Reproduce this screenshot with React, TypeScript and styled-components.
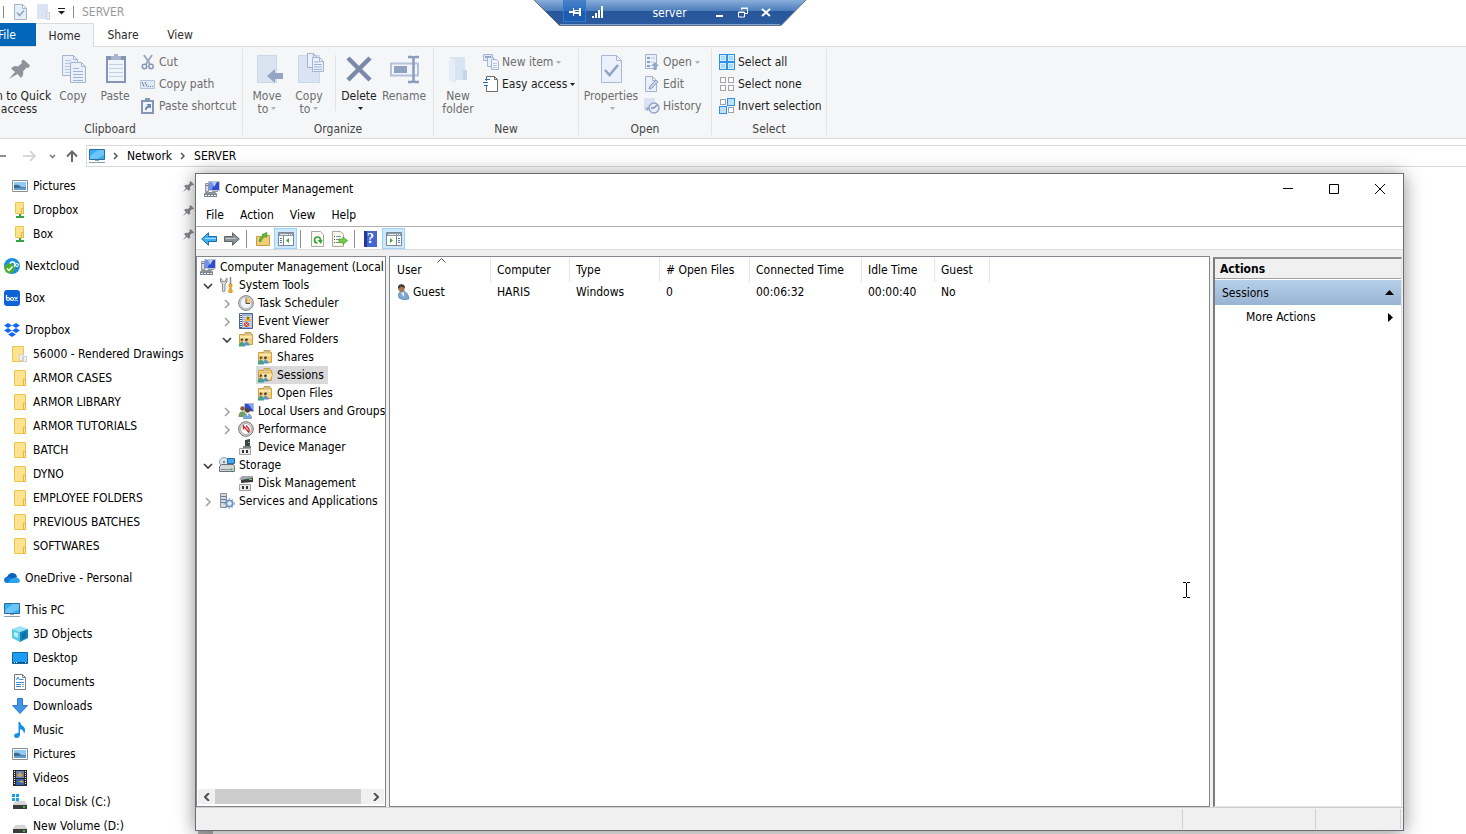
import React from "react";
import styled, { createGlobalStyle } from "styled-components";

const FONT = `"DejaVu Sans Condensed", "Open Sans", sans-serif`;

const GlobalStyle = createGlobalStyle`
  *, *::before, *::after { box-sizing: border-box; }
  html, body { margin: 0; height: 100%; background: #fff; }
  body { font: 12px/16px ${FONT}; color: #000; overflow: hidden; }
  button { font: inherit; color: inherit; background: none; border: 0; margin: 0; padding: 0; text-align: left; cursor: default; }
  a { color: inherit; text-decoration: none; }
  ul { list-style: none; margin: 0; padding: 0; }
  svg { display: block; flex: none; }
`;

/* ---------- icons ---------- */

type IconProps = { w?: number; h?: number; children: React.ReactNode };
const Ico = ({ w = 16, h = 16, children }: IconProps) => (
  <svg width={w} height={h} viewBox={`0 0 ${w} ${h}`} fill="none" aria-hidden="true">
    {children}
  </svg>
);

const Page = ({ x, y, w, h, c = "#a3b4d0", f = "#eaf0f9" }: { x: number; y: number; w: number; h: number; c?: string; f?: string }) => (
  <path d={`M${x + 0.5} ${y + 0.5}h${w - 5}l4 4v${h - 5}h${-(w - 1)}zM${x + w - 4.5} ${y + 0.5}v4h4`} fill={f} stroke={c} />
);

const Caret = ({ c = "#2b2b2b" }: { c?: string }) => (
  <Ico w={5} h={3}><path d="M0 0h5L2.500 3z" fill={c} /></Ico>
);

const PinBig = () => (
  <Ico w={32} h={32}>
    <path d="M6 26L12 19L8 15.500Q11 12 15 13.500L19 10L18 8.500L20.500 6.500L27 12.500L25.500 15L23.500 14.500L20 18.500Q21 22 18 25L14.500 21z" fill="#8f9399" />
  </Ico>
);
const CopyBig = () => (
  <Ico w={32} h={32}>
    <Page x={5} y={2} w={16} h={21} />
    <path d="M8 7.500h6M8 10.500h9M8 13.500h6M8 16.500h6M8 19.500h6" stroke="#b9c8e0" />
    <Page x={13} y={9} w={16} h={21} />
    <path d="M16 15.500h6M16 18.500h10M16 21.500h10M16 24.500h10M16 27.500h10" stroke="#9fb3d3" />
  </Ico>
);
const PasteBig = () => (
  <Ico w={32} h={32}>
    <path d="M7 3h20v27H7z" fill="#8595b5" />
    <path d="M9 7h16v21H9z" fill="#f0f5fc" />
    <path d="M10 11.500h14M10 15.500h14M10 19.500h14M10 23.500h14" stroke="#c3d0e6" />
    <path d="M12 7V3h3V1h4v2h3v4z" fill="#a9b6cc" />
  </Ico>
);
const MoveBig = () => (
  <Ico w={32} h={32}>
    <path d="M6 2h20v28H6z" fill="#d9e3f1" />
    <path d="M6.500 2.500h19v27h-19z" stroke="#cbd7ea" />
    <path d="M16 23l8-7v4h8v6h-8v4z" fill="#94a5c4" />
  </Ico>
);
const CopyToBig = () => (
  <Ico w={32} h={32}>
    <path d="M5 2h22v28H5z" fill="#d9e3f1" />
    <path d="M5.500 2.500h21v27h-21z" stroke="#cbd7ea" />
    <Page x={14} y={0} w={11} h={15} />
    <Page x={19} y={4} w={12} h={15} />
    <path d="M21 9h5M21 11.500h8M21 14h8M21 16.500h8" stroke="#9fb3d3" />
  </Ico>
);
const DeleteBig = () => (
  <Ico w={32} h={32}>
    <path d="M5 5L27 27M27 5L5 27" stroke="#7a89aa" strokeWidth="4.500" />
  </Ico>
);
const RenameBig = () => (
  <Ico w={32} h={32}>
    <path d="M3 10.500h27v12H3z" stroke="#b4c2da" strokeWidth="2" fill="#f2f6fc" />
    <path d="M6 13h13v7H6z" fill="#8fa1c2" />
    <path d="M20 4h3.500q2 0 2 2v21q0 2-2 2H20M31 4h-3.500q-2 0-2 2v21q0 2 2 2H31" stroke="#8c9cbb" strokeWidth="2.500" />
  </Ico>
);
const NewFolderBig = () => (
  <Ico w={32} h={32}>
    <path d="M7 4h16v12l2 2v9H14l-1 3l-6-3z" fill="#d9e4f2" />
    <path d="M7 4l6 3v23l-6-3z" fill="#e3ecf7" />
    <path d="M21 17h4v10h-4z" fill="#c7d5ea" />
  </Ico>
);
const PropertiesBig = () => (
  <Ico w={32} h={32}>
    <path d="M6.500 2.500h15l5 5v22h-20zM21.500 2.500v5h5" fill="#eaf1fa" stroke="#a9b9d3" />
    <path d="M10 17l4.500 5L23 12" stroke="#8fa3c6" strokeWidth="2.500" />
  </Ico>
);

const CutIcon = () => (
  <Ico>
    <path d="M4 1l6 9M12 1L6 10" stroke="#9aa8c1" strokeWidth="2" />
    <circle cx="4.500" cy="12.500" r="2.200" stroke="#8496b8" strokeWidth="1.500" />
    <circle cx="11" cy="12.500" r="2.200" stroke="#8496b8" strokeWidth="1.500" />
  </Ico>
);
const CopyPathIcon = () => (
  <Ico>
    <path d="M.5 4.500h14v8H.5z" fill="#dfe8f5" stroke="#b3c3de" />
    <path d="M2 6l2 4.500M5 6l2 4.500M8 10.500h1M10 10.500h1M12 10.500h1" stroke="#6d83ad" />
  </Ico>
);
const PasteShortIcon = () => (
  <Ico>
    <path d="M1 2h13v14H1z" fill="#8595b5" />
    <path d="M3 4h9v10H3z" fill="#f0f5fc" />
    <path d="M5 3V0h5v3z" fill="#8595b5" />
    <path d="M5 12q0-4 3-4L6.500 6H11v4.500L9.500 9.500Q7 9.500 6.500 12z" fill="#6f86b2" />
  </Ico>
);
const NewItemIcon = () => (
  <Ico>
    <path d="M.5.5h9v6h-9z" fill="#e2eaf6" stroke="#a3b4d0" />
    <path d="M2 3h6" stroke="#8ea1c3" strokeWidth="2" />
    <path d="M4.500 3.500h6v9h-6z" fill="#eaf0f9" stroke="#a3b4d0" />
    <path d="M8.500 5.500h5l2 2v8h-7z" fill="#f2f6fc" stroke="#a3b4d0" />
    <path d="M10 9.500h4M10 11.500h4M10 13.500h4" stroke="#b9c8e0" />
  </Ico>
);
const EasyIcon = () => (
  <Ico>
    <path d="M3.500 5V.5h8l3 3v12h-11V10M11.500.5v3h3" fill="#fff" stroke="#6b6b6b" />
    <path d="M2 3.500h5M0 6.500h5M1 9.500h4" stroke="#2b6f9e" />
  </Ico>
);
const OpenIcon = () => (
  <Ico>
    <path d="M1.500.5h11v14h-11z" fill="#eaf0f9" stroke="#a3b4d0" />
    <path d="M3 3h3v2H3zM3 7h3v2H3zM3 11h3v2H3z" fill="#8ea1c3" />
    <path d="M7 4h4M7 8h3" stroke="#b9c8e0" />
    <path d="M11 8l4 4h-2.500v4h-3v-4H7z" fill="#94a5c4" />
  </Ico>
);
const EditIcon = () => (
  <Ico>
    <Page x={1} y={0} w={12} h={16} />
    <path d="M5 13l1-3L12 4l2 2l-6 6z" fill="#c3d0e6" stroke="#8ea1c3" />
  </Ico>
);
const HistoryIcon = () => (
  <Ico>
    <path d="M0 0h11v13H0z" fill="#d9e3f1" />
    <circle cx="10" cy="10" r="5" fill="#e8eef7" stroke="#94a5c4" strokeWidth="1.500" />
    <path d="M10 10l3-3M10 10H7" stroke="#7a8fb5" strokeWidth="1.500" />
    <path d="M1 10l4-1l-1 4z" fill="#94a5c4" />
  </Ico>
);
const Cell = ({ x, y, on, s = 6 }: { x: number; y: number; on?: boolean; s?: number }) => (
  <rect x={x + 0.5} y={y + 0.5} width={s - 1} height={s - 1} fill={on ? "#bfe0fb" : "#fff"} stroke={on ? "#2d92e6" : "#a3a3a3"} />
);
const SelectAllIcon = () => (
  <Ico>
    <path d="M0 0h16v16H0z" fill="#2d92e6" />
    <path d="M1 1h6v6H1zM9 1h6v6H9zM1 9h6v6H1zM9 9h6v6H9z" fill="#d6edfd" />
    <path d="M2 2h4v4H2zM10 2h4v4h-4zM2 10h4v4H2zM10 10h4v4h-4z" fill="#abd9f9" />
  </Ico>
);
const SelectNoneIcon = () => (
  <Ico><Cell x={1} y={1} /><Cell x={9} y={1} /><Cell x={1} y={9} /><Cell x={9} y={9} /></Ico>
);
const InvertIcon = () => (
  <Ico><Cell x={1} y={1} /><Cell x={8} y={0} s={8} on /><Cell x={0} y={8} s={8} on /><Cell x={9} y={9} /></Ico>
);

const MonitorIcon = () => (
  <Ico>
    <path d="M.5 1.500h15v10H.5z" fill="#35aef5" stroke="#2d6d9c" />
    <path d="M1 8L9 2h6v5L8 11H1z" fill="#6cc6fa" />
    <path d="M6 12.500h4M0 14.500h16" stroke="#8aa0b4" />
  </Ico>
);

const PicturesIcon = () => (
  <Ico>
    <path d="M.5 2.500h15v11H.5z" fill="#fff" stroke="#8a8f94" />
    <path d="M2 4h12v8H2z" fill="#8fcbf2" />
    <path d="M2 7q4-1 6 1t6 1v3H2z" fill="#3a6a8c" />
    <path d="M2 10q6-1 12 0v2H2z" fill="#5f9fd0" />
  </Ico>
);
const FolderIcon = () => (
  <Ico>
    <path d="M2.500.5h11v15h-11z" fill="#fde38f" stroke="#ecc64d" />
    <path d="M11.500 9.500h2v6h-2z" fill="#fdeab0" stroke="#e3b733" />
  </Ico>
);
const SharedDocsFolderIcon = () => (
  <Ico>
    <path d="M.5.5h11v15H.5z" fill="#fde38f" stroke="#ecc64d" />
    <path d="M7.500 8.500h4v6h-4zM10.500 10.500h4v5h-4z" fill="#f2f2f2" stroke="#cfcfcf" />
  </Ico>
);
const NetFolderIcon = () => (
  <Ico>
    <path d="M3.500.5h8v11h-8z" fill="#fde38f" stroke="#ecc64d" />
    <path d="M9.500 6.500h2v5h-2z" fill="#fdeab0" stroke="#e3b733" />
    <path d="M7 12h2v2h3v2H4v-2h3z" fill="#2fa544" />
  </Ico>
);
const NextcloudIcon = () => (
  <Ico>
    <circle cx="8" cy="8" r="8" fill="#1f8fdc" />
    <circle cx="8.500" cy="6.500" r="2.500" stroke="#fff" strokeWidth="1.500" />
    <circle cx="13" cy="7" r="1.500" stroke="#fff" />
    <circle cx="5.500" cy="10.500" r="5" fill="#4caf2b" />
    <path d="M3 10.500l2 2l3.500-4" stroke="#fff" strokeWidth="1.500" />
  </Ico>
);
const BoxIcon = () => (
  <Ico>
    <rect width="16" height="16" rx="3" fill="#0d63d6" />
    <path d="M2.500 5v4M10.500 7l3 4M13.500 7l-3 4" stroke="#fff" strokeWidth="1.200" />
    <circle cx="4" cy="9" r="1.500" stroke="#fff" strokeWidth="1.200" />
    <circle cx="8" cy="9" r="1.500" stroke="#fff" strokeWidth="1.200" />
  </Ico>
);
const DropboxIcon = () => (
  <Ico>
    <path d="M4 1l4 2.500L4 6L0 3.500zM12 1l4 2.500L12 6L8 3.500zM4 6l4 2.500L4 11L0 8.500zM12 6l4 2.500L12 11L8 8.500zM8 10l4 2.500L8 15l-4-2.500z" fill="#1167fb" />
  </Ico>
);
const OneDriveIcon = () => (
  <Ico>
    <path d="M3 7Q5 2.500 9 3Q12.500 3.500 13 7L8 11L2 9z" fill="#0a63b8" />
    <path d="M3.500 13Q0 13 0 10Q0 7 3.500 6.500Q6 6.500 8 9l4 4z" fill="#1479d4" />
    <path d="M4 13q2-5 6-5Q12 6.500 14 8Q16 9 16 11q-.5 2-2.500 2z" fill="#2aa4ee" />
  </Ico>
);
const CubeIcon = () => (
  <Ico>
    <path d="M8 0l8 3l-8 3l-8-3z" fill="#9ae3f2" />
    <path d="M0 3l8 3v10l-8-4z" fill="#57cbe4" />
    <path d="M16 3l-8 3v10l8-4z" fill="#1685bd" />
    <path d="M2 6l4 1v5l-4-2z" fill="#b9f0f8" />
    <path d="M10 8l4-2v5l-4 2z" fill="#0f6da5" />
  </Ico>
);
const DesktopIcon = () => (
  <Ico>
    <path d="M.5 2.500h15v11H.5z" fill="#1c9cf2" stroke="#1266a8" />
    <path d="M1 12.500h14" stroke="#0b4f87" />
    <path d="M2 12.500h1M4 12.500h1M13 12.500h1" stroke="#fff" />
  </Ico>
);
const DocumentsIcon = () => (
  <Ico>
    <path d="M2.500.5h8l3 3v12h-11zM10.500.5v3h3" fill="#fff" stroke="#7d7d7d" />
    <path d="M4.500 6l1.500-3l1.500 3M8 5.500h3.500M4 8.500h8M4 10.500h5M4 12.500h5" stroke="#3b8bd0" />
    <path d="M10 10.500h2M10 12.500h2" stroke="#a0a0a0" />
  </Ico>
);
const DownloadsIcon = () => (
  <Ico><path d="M5.500.5h5v7h5L8 15.500L.5 7.500h5z" fill="#3f94e4" stroke="#2c7ccb" /></Ico>
);
const MusicIcon = () => (
  <Ico>
    <path d="M6.500 0h1.500q.5 3 4 5q2 3 0 7q0-4-4-5v6q-.5 3-3.500 3Q2 16 2 13.500Q2.500 11 6.500 11z" fill="#1490ea" />
  </Ico>
);
const VideosIcon = () => (
  <Ico>
    <path d="M1 0h14v16H1z" fill="#2b2b2b" />
    <path d="M4 1h8v7H4z" fill="#6b7fb8" /><path d="M4 9h8v6H4z" fill="#2f62ae" />
    <path d="M5 5l3-3l3 4l-4 1zM6 12l4-2l2 3z" fill="#d9a441" />
    <path d="M2.500 1v14M13.500 1v14" stroke="#e8e8e8" strokeDasharray="1 1" />
  </Ico>
);
const drive = (
  <>
    <path d="M3.500 7.500h9l2 3h-13z" fill="#d9d9d9" stroke="#bdbdbd" strokeWidth=".6" />
    <path d="M1 11h14v4H1z" fill="#3c3c3c" />
    <path d="M11 13h2" stroke="#4fd05a" strokeWidth="1.500" />
  </>
);
const LocalDiskIcon = () => (
  <Ico>
    <path d="M0 0h3v3H0zM4 0h3v3H4zM0 4h3v3H0zM4 4h3v3H4z" fill="#16a4e4" />
    {drive}
  </Ico>
);
const DriveIcon = () => <Ico>{drive}</Ico>;
const PinSmall = () => (
  <Ico w={11} h={11}>
    <path d="M0 11l3-4L1 5q2-2 4-1l2-2l-.5-1L7.500 0L11 3.500L10 4.500L9 4L7 6q1 2-1 4L4 8z" fill="#858a8f" />
  </Ico>
);

/* management console icons */
const MgmtIcon = () => (
  <Ico>
    <path d="M4.500.5h11v9h-11z" fill="#2f4bcf" stroke="#c3c7cf" />
    <path d="M5 1h6L7.500 9H5z" fill="#6f92ec" /><path d="M8 1h5l-3 5z" fill="#b5cbfa" />
    <path d="M8 10h6v1H8z" fill="#9298a0" />
    <path d="M1.500 2.500h3v8h-3z" fill="#d7dade" stroke="#8f959d" /><path d="M2 4.500h2" stroke="#6f767e" />
    <path d="M1.500 11.500h10l1 1h-12z" fill="#eceef0" stroke="#8b929a" />
    <path d="M0 13h13v3H0z" fill="#7d858e" />
    <path d="M1 14.500h11" stroke="#f0f2f4" strokeDasharray="2 1" />
  </Ico>
);
const ToolsIcon = () => (
  <Ico>
    <path d="M1.500 1v4l2 2v7q.5 2 2.500 0V7l2-2V1L6.500 3v1.500H3V3z" fill="#dcdcdc" stroke="#777" strokeWidth=".8" />
    <path d="M11.500 0v7" stroke="#8c8c8c" strokeWidth="1.500" />
    <path d="M10 7h3v2.500l-.7 1v1.500l.9 1v2.500H9.800V13l.9-1v-1.500l-.7-1z" fill="#f3b127" stroke="#c77b10" strokeWidth=".6" />
  </Ico>
);
const ClockIcon = () => (
  <Ico>
    <circle cx="8" cy="8" r="7.400" fill="#cfcfcf" stroke="#858585" />
    <circle cx="8" cy="8" r="5.600" fill="#f1f6fc" stroke="#a9a9a9" strokeWidth=".6" />
    <path d="M8 8V2.500A5.500 5.500 0 0 1 13.500 8z" fill="#f2c879" />
    <path d="M8 3.500v5h4" stroke="#4a4a4a" />
  </Ico>
);
const EventIcon = () => (
  <Ico>
    <path d="M1.500.5h13v15h-13z" fill="#9db4dc" stroke="#4d628c" />
    <path d="M5 3.500h9M5 5.500h9M5 7.500h9M5 9.500h9M5 11.500h9M5 13.500h9" stroke="#d3e0f5" />
    <path d="M3 1v14" stroke="#3f527b" strokeWidth="2" />
    <path d="M3 1v14" stroke="#fff" strokeWidth="2" strokeDasharray="1 1" />
    <path d="M10 2l3.500 6h-7z" fill="#f6b52a" />
    <path d="M10 4v2.500" stroke="#3a2a00" />
    <circle cx="8.500" cy="11.500" r="2.500" fill="#d8492b" />
    <path d="M7.500 10.500l2 2m0-2l-2 2" stroke="#fff" strokeWidth=".8" />
  </Ico>
);
const SharedFolder = ({ open }: { open?: boolean }) => (
  <Ico>
    <path d="M1.500 3.500h5.500v-2h6v2h1.500v10h-13z" fill="#f3cf7c" stroke="#cf9f42" />
    <path d="M8 3h4" stroke="#7fb2e0" />
    <path d={open ? "M4 6h12l-2.500 7H2z" : "M2 5h12v2H2z"} fill="#fce6ac" stroke={open ? "#d6a544" : "none"} strokeWidth=".7" />
    <circle cx="4" cy="9" r="1.400" fill="#5e4630" /><circle cx="8.500" cy="9" r="1.400" fill="#2f3a40" />
    <path d="M.8 15.500q0-4.500 3.200-4.500t3 4.500z" fill="#49a08a" />
    <path d="M6.200 14.500q0-3.500 2.500-3.500t3 3.500z" fill="#5a93cc" />
    <path d="M4.500 9.500l1.500 2M9 9.500l1.500 2" stroke="#f3dcc0" />
  </Ico>
);
const UsersIcon = () => (
  <Ico>
    <path d="M6.500.5h9v8h-9z" fill="#2f4bcf" stroke="#b4bacb" />
    <path d="M10 1h5v6z" fill="#88a4f7" />
    <circle cx="4.500" cy="5.500" r="2.300" fill="#8a5a33" />
    <path d="M.5 14q0-5.500 4-5.500T8 14z" fill="#6d9e5c" />
    <circle cx="9.500" cy="7.500" r="2.300" fill="#5b3d26" />
    <path d="M5 16q0-5.500 4.500-5.500T14 16z" fill="#7aa5d4" />
    <path d="M9 10l1 3" stroke="#fff" />
  </Ico>
);
const PerfIcon = () => (
  <Ico>
    <circle cx="8" cy="8" r="7.300" fill="#dcdcdc" stroke="#6e6e6e" />
    <circle cx="8" cy="8" r="5.400" fill="#fff" stroke="#8e8e8e" strokeWidth=".7" />
    <path d="M5.500 8.500V5l5.500 6.500M8 4.500L11 8v3" stroke="#c8242c" strokeWidth="1.300" />
  </Ico>
);
const Connector = () => (
  <>
    <path d="M1.500 9.500h11v6h-11z" fill="#ececec" stroke="#a0a0a0" />
    <path d="M4 11h2v3H4zM8 11h2v3H8z" fill="#333" />
  </>
);
const DeviceIcon = () => (
  <Ico>
    <path d="M7 1l5-1v7l-5 1z" fill="#3f4346" /><path d="M10 3.500h1.500" stroke="#5fe06a" />
    <path d="M5 7h8v2H5z" fill="#7b7f83" />
    <Connector />
  </Ico>
);
const StorageIcon = () => (
  <Ico>
    <circle cx="5" cy="5" r="4.500" fill="#dfe4ea" stroke="#98a0a8" /><circle cx="5" cy="5" r="1.300" fill="#8c949c" />
    <path d="M8.500 1.500h7v5h-7z" fill="#3fa9ec" stroke="#2c6ca0" />
    <path d="M.5 9.500l2-2h12l1 2v5H.5z" fill="#d3d7da" stroke="#6b7074" />
    <path d="M2 12.500h9" stroke="#8c9195" /><path d="M11.500 12.500h2" stroke="#35b54a" strokeWidth="2" />
  </Ico>
);
const DiskMgmtIcon = () => (
  <Ico>
    <path d="M3 3l12-1v5L3 8z" fill="#3a3d40" /><path d="M1 4l3-3h11v2L3 5z" fill="#a3a8ac" />
    <path d="M11 4.500h3" stroke="#5fe06a" />
    <Connector />
  </Ico>
);
const ServicesIcon = () => (
  <Ico>
    <path d="M1.500.5h6v14h-6z" fill="#d3dae2" stroke="#8590a0" />
    <path d="M2 3.500h5M2 6.500h5M2 9.500h5" stroke="#6d7a8c" />
    <circle cx="10.500" cy="10.500" r="3.200" fill="#cfe0f2" stroke="#6a8fb8" strokeWidth="1.500" />
    <circle cx="10.500" cy="10.500" r="4.800" stroke="#6a8fb8" strokeDasharray="1.500 2" />
    <circle cx="10.500" cy="10.500" r="1" fill="#fff" />
  </Ico>
);
const PersonIcon = () => (
  <Ico w={14}>
    <path d="M3 14q-2-6 3-7q6 0 7 8q-6 2-10-1z" fill="#7ea9d2" stroke="#4c739c" strokeWidth=".6" />
    <path d="M5 9l3 4V8z" fill="#e8f1fa" />
    <circle cx="5.500" cy="4.500" r="3.200" fill="#a9774a" />
    <path d="M2 5Q1.500.3 5.300.2T9 4L5 2.500z" fill="#3b3b3b" />
  </Ico>
);

const ArrowIcon = ({ back }: { back?: boolean }) => (
  <Ico>
    <path
      d={back ? "M.7 8L7.500 1.800v3.700h8v5h-8v3.700z" : "M15.300 8L8.500 1.800v3.700h-8v5h8v3.700z"}
      fill={back ? "#3fb0ee" : "#8d9296"}
      stroke={back ? "#1d6cae" : "#5f6366"}
    />
    <path d={back ? "M4 7.500h11" : "M1 7.500h11"} stroke={back ? "#a5dcf9" : "#c3c7ca"} />
  </Ico>
);
const UpFolderIcon = () => (
  <Ico>
    <path d="M1.500 5.500h5l1-1h7v10h-13z" fill="#f2cd75" stroke="#c99a3a" />
    <path d="M4 10.500q0-4 4-5.500L7 3.500L12 1.500l-.5 5L10.200 5.500Q6.500 7 6 10.500z" fill="#5fc23c" stroke="#2f8220" strokeWidth=".6" />
  </Ico>
);
const PanelIcon = ({ right }: { right?: boolean }) => (
  <Ico>
    <path d="M.5 1.500h15v13H.5z" fill="#fff" stroke="#7d8794" />
    <path d="M1 2h14v3H1z" fill="#8d98a6" /><path d="M2 3.500h8" stroke="#dfe5ec" />
    <path d="M11 3.500h1M13 3.500h1" stroke="#fff" />
    {right ? (
      <><path d="M10.500 5v9" stroke="#7d8794" /><path d="M12 7.500h2M12 9.500h2M12 11.500h2" stroke="#4d7fc0" /><path d="M4 7v5l3-2.500z" fill="#3cab2f" /></>
    ) : (
      <><path d="M5.500 5v9" stroke="#7d8794" /><path d="M2 7.500h2M2 9.500h2M2 11.500h2" stroke="#4d7fc0" /><path d="M11 7v5l-3-2.500z" fill="#3cab2f" /></>
    )}
  </Ico>
);
const RefreshIcon = () => (
  <Ico>
    <path d="M2.500.5h9l3 3v12h-12z" fill="#fbfbf4" stroke="#a8a8a0" />
    <path d="M11.500 9A3 3 0 1 0 8.500 12" stroke="#35a531" strokeWidth="1.700" /><path d="M8.500 9h5l-1.500 4z" fill="#35a531" />
  </Ico>
);
const ExportIcon = () => (
  <Ico>
    <path d="M.5.5h8l3 3v12H.5z" fill="#fbfaea" stroke="#a8a8a0" />
    <path d="M2 5.500h1M2 8.500h1M2 11.500h1" stroke="#555" /><path d="M4 5.500h5M4 8.500h4M4 11.500h4" stroke="#7b8fb5" />
    <path d="M7 8h4V6l4.500 3.500l-4.500 4V11.500H7z" fill="#6fcf4a" stroke="#3c9a2a" strokeWidth=".7" />
  </Ico>
);
const HelpGlyph = styled.span`
  width: 13px; height: 16px; background: linear-gradient(90deg, #26389c 3px, #4466cf 3px);
  color: #fff; font: bold 14px/16px "Liberation Serif", serif; text-align: center;
`;

/* ---------- remote session bar ---------- */

const RdpBar = styled.div`
  position: absolute; z-index: 5; top: 0; left: 533px; width: 274px; height: 27px;
`;
const RdpShape = styled.svg`position: absolute; inset: 0;`;
const RdpRow = styled.div`
  position: relative; display: flex; align-items: flex-start; padding: 0 30px; color: #fff;
`;
const RdpButton = styled.button<{ $on?: boolean }>`
  display: grid; place-items: center; width: 23px; height: 22px; padding-top: 2px;
  background: ${(p) => (p.$on ? "rgba(20, 96, 190, 0.55)" : "none")};
  border: ${(p) => (p.$on ? "1px solid #2a7bd6" : "0")}; border-top: 0;
`;
const RdpTitle = styled.span`flex: 1; text-align: center; padding: 5px 0 0 22px;`;

/* ---------- explorer ---------- */

const Screen = styled.div`position: relative; height: 100vh; overflow: hidden; background: #fff;`;
const Explorer = styled.div`margin-left: -22px; display: flex; flex-direction: column; height: 100%;`;
const TitleStrip = styled.header`
  display: flex; align-items: center; gap: 8px; height: 23px; padding-left: 25px; color: #999;
`;
const Bar = styled.i`width: 1px; height: 12px; background: #8a8a8a;`;
const QuickButton = styled.button<{ $w: number }>`display: grid; place-items: center; width: ${(p) => p.$w}px; height: 16px;`;
const Tabs = styled.div`display: flex; height: 24px; border-bottom: 1px solid #dadbdc;`;
const Tab = styled.button<{ $kind?: "file" | "active" }>`
  height: ${(p) => (p.$kind === "file" ? 23 : 24)}px;
  width: 58px; margin-right: ${(p) => (p.$kind ? 0 : -1)}px; text-align: center; color: #2b2b2b;
  ${(p) => p.$kind === "file" && "background: #0067b8; color: #fff;"}
  ${(p) => p.$kind === "active" && "background: #f5f6f7; border: 1px solid #dadbdc; border-width: 1px 1px 0 0;"}
`;
const Ribbon = styled.div`display: flex; height: 92px; background: #f5f6f7; border-bottom: 1px solid #dadbdc;`;
const Group = styled.section<{ $w: number }>`
  display: flex; flex-direction: column; width: ${(p) => p.$w}px; margin: 2px 0 3px;
  border-right: 1px solid #e2e3e4; padding-top: 2px;
`;
const GroupBody = styled.div<{ $pad: number }>`display: flex; flex: 1; padding-left: ${(p) => p.$pad}px;`;
const GroupLabel = styled.div`text-align: center; color: #444; line-height: 12px;`;
const BigButton = styled.button<{ $w: number; $off?: boolean }>`
  display: flex; flex-direction: column; align-items: center; width: ${(p) => p.$w}px; padding-top: 2px;
  text-align: center; line-height: 13px; white-space: nowrap; color: ${(p) => (p.$off ? "#6d6d6d" : "#1e1e1e")};
`;
const BigLabel = styled.span`
  margin-top: 5px;
  svg { display: inline-block; vertical-align: 3px; margin-left: 3px; }
`;
const InnerBar = styled.i`width: 1px; height: 56px; margin: 4px 2px 0 5px; background: #e2e3e4;`;
const SmallList = styled.div<{ $ml: number }>`display: flex; flex-direction: column; margin-left: ${(p) => p.$ml}px;`;
const SmallButton = styled.button<{ $off?: boolean }>`
  display: flex; align-items: center; gap: 3px; height: 22px; white-space: nowrap;
  color: ${(p) => (p.$off ? "#6d6d6d" : "#1e1e1e")};
`;

const AddressRow = styled.div`display: flex; align-items: center; height: 34px; padding-left: 6px;`;
const NavButton = styled.button<{ $w: number }>`display: grid; place-items: center; width: ${(p) => p.$w}px; height: 22px;`;
const AddressBox = styled.nav`
  display: flex; align-items: center; flex: 1; height: 22px; padding-left: 2px;
  border: 1px solid #d9d9d9; border-right: 0;
`;
const CrumbMark = styled.span`padding: 0 9px 0 8px;`;

const ExplorerBody = styled.div`display: flex; flex: 1; min-height: 0;`;
const Sidebar = styled.nav`width: 220px; overflow: hidden; padding-left: 26px;`;
const NavGroup = styled.ul`margin-bottom: 8px; &:first-child { margin-top: 1px; }`;
const NavItem = styled.a<{ $child?: boolean }>`
  display: flex; align-items: center; gap: 5px; height: 24px; white-space: nowrap;
  padding-left: ${(p) => (p.$child ? 8 : 0)}px;
`;
const PinSpot = styled.span`margin: 0 4px 0 auto;`;
const ExplorerScroll = styled.div`width: 15px; background: #b4b4b4;`;

type NavEntry = { label: string; icon: React.ReactNode; child?: boolean; pin?: boolean };
const folders = ["ARMOR CASES", "ARMOR LIBRARY", "ARMOR TUTORIALS", "BATCH", "DYNO", "EMPLOYEE FOLDERS", "PREVIOUS BATCHES", "SOFTWARES"];
const navGroups: NavEntry[][] = [
  [
    { label: "Pictures", icon: <PicturesIcon />, child: true, pin: true },
    { label: "Dropbox", icon: <NetFolderIcon />, child: true, pin: true },
    { label: "Box", icon: <NetFolderIcon />, child: true, pin: true },
  ],
  [{ label: "Nextcloud", icon: <NextcloudIcon /> }],
  [{ label: "Box", icon: <BoxIcon /> }],
  [
    { label: "Dropbox", icon: <DropboxIcon /> },
    { label: "56000 - Rendered Drawings", icon: <SharedDocsFolderIcon />, child: true },
    ...folders.map((label) => ({ label, icon: <FolderIcon />, child: true })),
  ],
  [{ label: "OneDrive - Personal", icon: <OneDriveIcon /> }],
  [
    { label: "This PC", icon: <MonitorIcon /> },
    { label: "3D Objects", icon: <CubeIcon />, child: true },
    { label: "Desktop", icon: <DesktopIcon />, child: true },
    { label: "Documents", icon: <DocumentsIcon />, child: true },
    { label: "Downloads", icon: <DownloadsIcon />, child: true },
    { label: "Music", icon: <MusicIcon />, child: true },
    { label: "Pictures", icon: <PicturesIcon />, child: true },
    { label: "Videos", icon: <VideosIcon />, child: true },
    { label: "Local Disk (C:)", icon: <LocalDiskIcon />, child: true },
    { label: "New Volume (D:)", icon: <DriveIcon />, child: true },
  ],
];

const Chevron = ({ c = "#555" }: { c?: string }) => (
  <Ico w={5} h={8}><path d="M1 1l3 3l-3 3" stroke={c} strokeWidth="1.500" /></Ico>
);

const Big = ({ w, icon, lines, caret, off }: { w: number; icon: React.ReactNode; lines: string[]; caret?: boolean; off?: boolean }) => (
  <BigButton $w={w} $off={off}>
    {icon}
    <BigLabel>
      {lines[0]}
      {(lines[1] || caret) && <br />}
      {lines[1]}
      {caret && <Caret c={off ? "#b0b0b0" : "#1e1e1e"} />}
    </BigLabel>
  </BigButton>
);
const Small = ({ icon, label, caret, off }: { icon: React.ReactNode; label: string; caret?: boolean; off?: boolean }) => (
  <SmallButton $off={off}>
    {icon}
    <span>{label}</span>
    {caret && <Caret c={off ? "#b0b0b0" : "#1e1e1e"} />}
  </SmallButton>
);
const RibbonGroup = ({ w, pad, label, children }: { w: number; pad: number; label: string; children: React.ReactNode }) => (
  <Group $w={w}>
    <GroupBody $pad={pad}>{children}</GroupBody>
    <GroupLabel>{label}</GroupLabel>
  </Group>
);

/* ---------- management window ---------- */

const Window = styled.main`
  position: absolute; z-index: 3; top: 173px; left: 195px; right: 62px; bottom: 3px;
  display: flex; flex-direction: column; background: #f0f0f0; border: 1px solid #6b6e70;
  box-shadow: 0 2px 18px rgba(0, 0, 0, 0.45);
`;
const WindowTitle = styled.header`
  display: flex; align-items: center; gap: 5px; height: 29px; padding-left: 8px; background: #fff;
`;
const WindowButtons = styled.div`display: flex; margin-left: auto;`;
const WindowButton = styled.button`display: grid; place-items: center; width: 46px; height: 28px;`;
const MenuBar = styled.div`
  display: flex; height: 24px; padding: 0 2px; background: #fff; border-bottom: 1px solid #b0b0b0;
`;
const MenuItem = styled.button`padding: 0 8px;`;
const ToolBar = styled.div`
  display: flex; align-items: flex-end; height: 23px; padding-left: 1px; background: #fff; border-bottom: 1px solid #d9d9d9;
`;
const ToolButton = styled.button<{ $on?: boolean }>`
  display: grid; place-items: center; width: 23px; height: 21px;
  background: ${(p) => (p.$on ? "#cce8ff" : "none")}; border: 1px solid ${(p) => (p.$on ? "#99d1ff" : "transparent")};
`;
const ToolBarLine = styled.i`width: 1px; height: 18px; margin: 0 4px 1px 3px; background: #8f8f8f;`;
const Panes = styled.div`display: flex; flex: 1; min-height: 0; padding-top: 6px;`;
const TreePane = styled.div`
  display: flex; flex-direction: column; width: 190px; background: #fff; border: 1px solid #828790;
  padding: 1px 0 2px 1px; overflow: hidden;
`;
const Tree = styled.ul`flex: 1; overflow: hidden;`;
const TreeRow = styled.li<{ $depth: number }>`
  display: flex; height: 18px; padding-left: ${(p) => (p.$depth ? p.$depth * 19 - 17 : 1)}px;
`;
const Twisty = styled.button`
  display: grid; place-items: center; flex: none; width: 16px; height: 18px; padding-top: 2px; margin-right: 2px;
`;
const TreeItem = styled.button<{ $selected?: boolean }>`
  display: flex; align-items: center; flex: none; gap: 4px; padding: 0 4px 0 1px; height: 18px; white-space: nowrap;
  background: ${(p) => (p.$selected ? "#d9d9d9" : "none")};
`;
const ScrollRow = styled.div`display: flex; height: 15px; margin-right: 1px; background: #f0f0f0;`;
const ScrollArrow = styled.button`display: grid; place-items: center; width: 17px; height: 15px;`;
const ScrollThumb = styled.div`width: 146px; margin-right: auto; background: #cdcdcd;`;

const ListPane = styled.div`
  flex: 1; margin-left: 3px; background: #fff; border: 1px solid #828790; overflow: hidden; padding-top: 1px;
`;
const Grid = styled.table`table-layout: fixed; border-spacing: 0; width: 600px;`;
const HeadCell = styled.th`
  position: relative; height: 24px; padding: 0 0 0 7px; text-align: left; font-weight: 400; white-space: nowrap;
  border-right: 1px solid #e5e5e5;
  &:nth-child(n + 2) { padding-left: 6px; }
`;
const SortMark = styled.span`position: absolute; top: 0; left: 47px;`;
const BodyCell = styled.td`
  height: 20px; padding: 0 0 0 7px; white-space: nowrap;
  &:nth-child(n + 2) { padding-left: 6px; }
`;
const UserCell = styled.div`display: flex; align-items: center; gap: 3px; margin-left: -1px;`;

const ActionsPane = styled.aside`
  width: 189px; margin: 1px 1px 0 3px; background: #fff; border: 2px solid; border-color: #8a8a8a #e3e3e3 #e3e3e3 #7c7c7c;
  border-right-width: 1px; border-bottom-width: 1px;
`;
const ActionsHead = styled.h2`
  margin: 0 0 1px; padding: 1px 0 0 5px; height: 20px; font: bold 12px/19px ${FONT}; background: #f0f0f0; border-bottom: 1px solid #a0a0a0;
`;
const ActionsGroup = styled.button`
  display: flex; align-items: center; justify-content: space-between; width: 100%; height: 25px; padding: 0 7px;
  background: linear-gradient(#b5d0ea, #99b4d3);
`;
const ActionsLink = styled.button`
  display: flex; align-items: center; justify-content: space-between; width: 100%; height: 24px; padding: 0 8px 0 31px;
`;
const StatusBar = styled.footer`
  display: flex; justify-content: flex-end; height: 23px; border-top: 1px solid #d0d0d0; padding: 1px 2px 1px 0;
`;
const StatusCell = styled.div<{ $w: number }>`
  width: ${(p) => p.$w}px; border-left: 1px solid #d0d0d0;
  &:last-child { border-right: 1px solid #d0d0d0; }
`;
const TextCursor = styled.svg`position: absolute; z-index: 6; left: 1183px; top: 582px;`;

type Node = { label: string; depth: number; icon: React.ReactNode; state?: "open" | "closed"; selected?: boolean };
const tree: Node[] = [
  { label: "Computer Management (Local", depth: 0, icon: <MgmtIcon /> },
  { label: "System Tools", depth: 1, icon: <ToolsIcon />, state: "open" },
  { label: "Task Scheduler", depth: 2, icon: <ClockIcon />, state: "closed" },
  { label: "Event Viewer", depth: 2, icon: <EventIcon />, state: "closed" },
  { label: "Shared Folders", depth: 2, icon: <SharedFolder />, state: "open" },
  { label: "Shares", depth: 3, icon: <SharedFolder /> },
  { label: "Sessions", depth: 3, icon: <SharedFolder open />, selected: true },
  { label: "Open Files", depth: 3, icon: <SharedFolder /> },
  { label: "Local Users and Groups", depth: 2, icon: <UsersIcon />, state: "closed" },
  { label: "Performance", depth: 2, icon: <PerfIcon />, state: "closed" },
  { label: "Device Manager", depth: 2, icon: <DeviceIcon /> },
  { label: "Storage", depth: 1, icon: <StorageIcon />, state: "open" },
  { label: "Disk Management", depth: 2, icon: <DiskMgmtIcon /> },
  { label: "Services and Applications", depth: 1, icon: <ServicesIcon />, state: "closed" },
];

const columns: [string, number, string][] = [
  ["User", 101, "Guest"],
  ["Computer", 79, "HARIS"],
  ["Type", 90, "Windows"],
  ["# Open Files", 90, "0"],
  ["Connected Time", 112, "00:06:32"],
  ["Idle Time", 73, "00:00:40"],
  ["Guest", 55, "No"],
];

export default function App() {
  return (
    <Screen>
      <GlobalStyle />
      <RdpBar>
        <RdpShape width="274" height="27" viewBox="0 0 274 27">
          <defs>
            <linearGradient id="rdp" x1="0" y1="0" x2="0" y2="1">
              <stop offset="0" stopColor="#8fb2de" />
              <stop offset=".45" stopColor="#4a7dbb" />
              <stop offset=".46" stopColor="#28579b" />
              <stop offset="1" stopColor="#2a5a9f" />
            </linearGradient>
          </defs>
          <path d="M0-1L26.500 25.500H248L274-1z" fill="url(#rdp)" stroke="#66707c" />
          <path d="M27 24.500H247" stroke="#7ea3d6" />
        </RdpShape>
        <RdpRow>
          <RdpButton $on aria-label="Pin bar">
            <Ico w={12} h={10}><path d="M0 5h4" stroke="#fff" strokeWidth="2" /><path d="M4.500 1v8" stroke="#fff" /><path d="M5 3h6v4H5z" fill="#fff" /><path d="M6 4h4v1H6z" fill="#2a64b0" /><path d="M11 1v8" stroke="#fff" strokeWidth="2" /></Ico>
          </RdpButton>
          <RdpButton aria-label="Connection quality">
            <Ico w={12} h={12}><path d="M0 10h2v2H0zM3 7h2v5H3zM6 4h2v8H6zM9 0h2v12H9z" fill="#fff" /></Ico>
          </RdpButton>
          <RdpTitle>server</RdpTitle>
          <RdpButton aria-label="Minimize"><Ico w={8} h={12}><path d="M0 9h7v2H0z" fill="#fff" /></Ico></RdpButton>
          <RdpButton aria-label="Restore">
            <Ico w={10} h={11}><path d="M3.500 3V1.500h6v5H7M.5 5h6v5h-6zM3 1h7M0 5.500h7" stroke="#fff" /></Ico>
          </RdpButton>
          <RdpButton aria-label="Close"><Ico w={10} h={9}><path d="M1 1l8 7M9 1L1 8" stroke="#fff" strokeWidth="2" /></Ico></RdpButton>
        </RdpRow>
      </RdpBar>

      <Explorer>
        <TitleStrip>
          <Bar />
          <QuickButton $w={17} aria-label="Properties">
            <Ico w={13}><path d="M.5.5h8l4 4v11H.5zM8.500.5v4h4" fill="#e6eef9" stroke="#a3b4d0" /><path d="M3 8.500l2.500 3l4.500-5" stroke="#8fa3c6" strokeWidth="1.500" /></Ico>
          </QuickButton>
          <QuickButton $w={13} aria-label="New folder">
            <Ico w={13}><path d="M0 0h11v15H0z" fill="#dbe4f2" /><path d="M9.500 8.500h3v7h-3z" fill="#e8eef8" stroke="#c7d3e7" /></Ico>
          </QuickButton>
          <QuickButton $w={7} aria-label="Customize">
            <Ico w={7} h={7}><path d="M0 .5h7" stroke="#1e1e1e" /><path d="M0 3h7L3.500 6.500z" fill="#1e1e1e" /></Ico>
          </QuickButton>
          <Bar />
          <span>SERVER</span>
        </TitleStrip>
        <Tabs>
          <Tab $kind="file">File</Tab>
          <Tab $kind="active">Home</Tab>
          <Tab>Share</Tab>
          <Tab>View</Tab>
        </Tabs>
        <Ribbon>
          <RibbonGroup w={265} pad={8} label="Clipboard">
            <Big w={66} icon={<PinBig />} lines={["Pin to Quick", "access"]} />
            <Big w={42} icon={<CopyBig />} lines={["Copy"]} off />
            <Big w={42} icon={<PasteBig />} lines={["Paste"]} off />
            <SmallList $ml={4}>
              <Small icon={<CutIcon />} label="Cut" off />
              <Small icon={<CopyPathIcon />} label="Copy path" off />
              <Small icon={<PasteShortIcon />} label="Paste shortcut" off />
            </SmallList>
          </RibbonGroup>
          <RibbonGroup w={191} pad={3} label="Organize">
            <Big w={42} icon={<MoveBig />} lines={["Move", "to"]} caret off />
            <Big w={42} icon={<CopyToBig />} lines={["Copy", "to"]} caret off />
            <InnerBar />
            <Big w={42} icon={<DeleteBig />} lines={["Delete"]} caret />
            <Big w={48} icon={<RenameBig />} lines={["Rename"]} off />
          </RibbonGroup>
          <RibbonGroup w={145} pad={3} label="New">
            <Big w={42} icon={<NewFolderBig />} lines={["New", "folder"]} off />
            <SmallList $ml={4}>
              <Small icon={<NewItemIcon />} label="New item" caret off />
              <Small icon={<EasyIcon />} label="Easy access" caret />
            </SmallList>
          </RibbonGroup>
          <RibbonGroup w={133} pad={3} label="Open">
            <Big w={58} icon={<PropertiesBig />} lines={["Properties"]} caret off />
            <SmallList $ml={4}>
              <Small icon={<OpenIcon />} label="Open" caret off />
              <Small icon={<EditIcon />} label="Edit" off />
              <Small icon={<HistoryIcon />} label="History" off />
            </SmallList>
          </RibbonGroup>
          <RibbonGroup w={115} pad={3} label="Select">
            <SmallList $ml={4}>
              <Small icon={<SelectAllIcon />} label="Select all" />
              <Small icon={<SelectNoneIcon />} label="Select none" />
              <Small icon={<InvertIcon />} label="Invert selection" />
            </SmallList>
          </RibbonGroup>
        </Ribbon>
        <AddressRow>
          <NavButton $w={28} aria-label="Back"><Ico w={16} h={12}><path d="M1 6h15M6 1L1 6l5 5" stroke="#6b6b6b" strokeWidth="1.500" /></Ico></NavButton>
          <NavButton $w={34} aria-label="Forward"><Ico w={14} h={12}><path d="M1 6h11M8 1l5 5l-5 5" stroke="#cdcdcd" strokeWidth="1.500" /></Ico></NavButton>
          <NavButton $w={12} aria-label="Recent locations"><Ico w={7} h={5}><path d="M1 1l2.500 2.500L6 1" stroke="#777" strokeWidth="1.500" /></Ico></NavButton>
          <NavButton $w={28} aria-label="Up"><Ico w={12} h={12}><path d="M6 12V1.500M1 6.500l5-5l5 5" stroke="#6b6b6b" strokeWidth="2" /></Ico></NavButton>
          <AddressBox aria-label="Address">
            <MonitorIcon />
            <CrumbMark><Chevron /></CrumbMark>
            <a href="#network">Network</a>
            <CrumbMark><Chevron /></CrumbMark>
            <a href="#server">SERVER</a>
          </AddressBox>
        </AddressRow>
        <ExplorerBody>
          <Sidebar aria-label="Folders">
            {navGroups.map((group, i) => (
              <NavGroup key={i}>
                {group.map((n) => (
                  <li key={n.label}>
                    <NavItem href="#" $child={n.child}>
                      {n.icon}
                      <span>{n.label}</span>
                      {n.pin && <PinSpot><PinSmall /></PinSpot>}
                    </NavItem>
                  </li>
                ))}
              </NavGroup>
            ))}
          </Sidebar>
          <ExplorerScroll />
        </ExplorerBody>
      </Explorer>

      <Window>
        <WindowTitle>
          <MgmtIcon />
          <span>Computer Management</span>
          <WindowButtons>
            <WindowButton aria-label="Minimize"><Ico w={10} h={10}><path d="M0 4.500h10" stroke="#000" /></Ico></WindowButton>
            <WindowButton aria-label="Maximize"><Ico w={10} h={10}><path d="M.5.5h9v9h-9z" stroke="#000" /></Ico></WindowButton>
            <WindowButton aria-label="Close"><Ico w={10} h={10}><path d="M0 0l10 10M10 0L0 10" stroke="#000" /></Ico></WindowButton>
          </WindowButtons>
        </WindowTitle>
        <MenuBar>
          {["File", "Action", "View", "Help"].map((m) => <MenuItem key={m}>{m}</MenuItem>)}
        </MenuBar>
        <ToolBar>
          <ToolButton aria-label="Back"><ArrowIcon back /></ToolButton>
          <ToolButton aria-label="Forward"><ArrowIcon /></ToolButton>
          <ToolBarLine />
          <ToolButton aria-label="Up one level"><UpFolderIcon /></ToolButton>
          <ToolButton $on aria-label="Show console tree"><PanelIcon /></ToolButton>
          <ToolBarLine />
          <ToolButton aria-label="Refresh"><RefreshIcon /></ToolButton>
          <ToolButton aria-label="Export list"><ExportIcon /></ToolButton>
          <ToolBarLine />
          <ToolButton aria-label="Help"><HelpGlyph>?</HelpGlyph></ToolButton>
          <ToolButton $on aria-label="Show action pane"><PanelIcon right /></ToolButton>
        </ToolBar>
        <Panes>
          <TreePane>
            <Tree>
              {tree.map((n) => (
                <TreeRow key={n.label} $depth={n.depth}>
                  {n.depth > 0 && (
                    <Twisty as={n.state ? "button" : "span"} aria-label={n.state ? `Toggle ${n.label}` : undefined}>
                      {n.state === "open" && <Ico w={10} h={6}><path d="M1 1l4 4l4-4" stroke="#404040" strokeWidth="1.700" /></Ico>}
                      {n.state === "closed" && <Ico w={6} h={10}><path d="M1 1l4 4l-4 4" stroke="#a6a6a6" strokeWidth="1.700" /></Ico>}
                    </Twisty>
                  )}
                  <TreeItem $selected={n.selected}>
                    {n.icon}
                    <span>{n.label}</span>
                  </TreeItem>
                </TreeRow>
              ))}
            </Tree>
            <ScrollRow>
              <ScrollArrow aria-label="Scroll left"><Ico w={6} h={8}><path d="M5 0L1 4l4 4" stroke="#505050" strokeWidth="2" /></Ico></ScrollArrow>
              <ScrollThumb />
              <ScrollArrow aria-label="Scroll right"><Ico w={6} h={8}><path d="M1 0l4 4l-4 4" stroke="#505050" strokeWidth="2" /></Ico></ScrollArrow>
            </ScrollRow>
          </TreePane>
          <ListPane>
            <Grid>
              <colgroup>{columns.map(([name, w]) => <col key={name} width={w} />)}</colgroup>
              <thead>
                <tr>
                  {columns.map(([name], i) => (
                    <HeadCell key={name} scope="col">
                      {name}
                      {i === 0 && <SortMark><Ico w={9} h={5}><path d="M.5 4.500l4-4l4 4" stroke="#555" /></Ico></SortMark>}
                    </HeadCell>
                  ))}
                </tr>
              </thead>
              <tbody>
                <tr>
                  {columns.map(([name, , value], i) => (
                    <BodyCell key={name}>{i === 0 ? <UserCell><PersonIcon />{value}</UserCell> : value}</BodyCell>
                  ))}
                </tr>
              </tbody>
            </Grid>
          </ListPane>
          <ActionsPane>
            <ActionsHead>Actions</ActionsHead>
            <ActionsGroup>Sessions<Ico w={9} h={5}><path d="M0 5L4.500 0L9 5z" fill="#000" /></Ico></ActionsGroup>
            <ActionsLink>More Actions<Ico w={5} h={9}><path d="M0 0l5 4.500L0 9z" fill="#000" /></Ico></ActionsLink>
          </ActionsPane>
        </Panes>
        <StatusBar>
          <StatusCell $w={133} />
          <StatusCell $w={86} />
        </StatusBar>
      </Window>

      <TextCursor width="7" height="16" viewBox="0 0 7 16" fill="none" aria-hidden="true">
        <path d="M0 .5h3M4 .5h3M3.500 1v14M0 15.500h3M4 15.500h3" stroke="#000" />
      </TextCursor>
    </Screen>
  );
}
